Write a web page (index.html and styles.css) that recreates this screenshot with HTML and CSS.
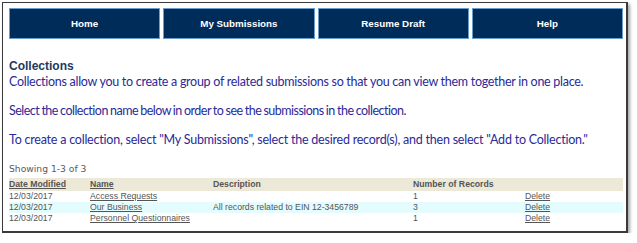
FILE: index.html
```html
<!DOCTYPE html>
<html>
<head>
<meta charset="utf-8">
<link rel="stylesheet" href="styles.css">
</head>
<body>
<div class="frame">
  <nav class="nav">
    <a class="nav-btn">Home</a>
    <a class="nav-btn">My Submissions</a>
    <a class="nav-btn">Resume Draft</a>
    <a class="nav-btn">Help</a>
  </nav>
  <h2 class="title">Collections</h2>
  <p class="intro first">Collections allow you to create a group of related submissions so that you can view them together in one place.</p>
  <p class="intro second">Select the collection name below in order to see the submissions in the collection.</p>
  <p class="intro third">To create a collection, select "My Submissions", select the desired record(s), and then select "Add to Collection."</p>
  <div class="showing">Showing 1-3 of 3</div>
  <table class="grid">
    <colgroup>
      <col class="c-date">
      <col class="c-name">
      <col class="c-desc">
      <col class="c-num">
      <col class="c-del">
    </colgroup>
    <thead>
      <tr>
        <th><a>Date Modified</a></th>
        <th><a>Name</a></th>
        <th>Description</th>
        <th>Number of Records</th>
        <th></th>
      </tr>
    </thead>
    <tbody>
      <tr>
        <td>12/03/2017</td>
        <td><a>Access Requests</a></td>
        <td></td>
        <td>1</td>
        <td><a>Delete</a></td>
      </tr>
      <tr class="alt">
        <td>12/03/2017</td>
        <td><a>Our Business</a></td>
        <td>All records related to EIN 12-3456789</td>
        <td>3</td>
        <td><a>Delete</a></td>
      </tr>
      <tr>
        <td>12/03/2017</td>
        <td><a>Personnel Questionnaires</a></td>
        <td></td>
        <td>1</td>
        <td><a>Delete</a></td>
      </tr>
    </tbody>
  </table>
</div>
</body>
</html>
```
FILE: styles.css
```css
html, body {
  margin: 0;
  padding: 0;
  background: #ffffff;
}
.frame {
  box-sizing: border-box;
  margin: 2px 0 0 2px;
  width: 626px;
  height: 231px;
  border: 1px solid #3a3a3a;
  border-width: 1px 2px 2px 1px;
  box-shadow: 2px 2px 3px rgba(0,0,0,0.35);
  padding: 5px 3px 0 6px;
  font-family: "Liberation Sans", Arial, sans-serif;
}
.nav {
  display: flex;
  gap: 3px;
  width: 614px;
}
.nav-btn {
  flex: 1;
  box-sizing: border-box;
  height: 31px;
  display: flex;
  align-items: center;
  justify-content: center;
  background: #002c5a;
  border: 1px solid #6c9cc8;
  color: #ffffff;
  font-weight: bold;
  font-size: 9.8px;
}
.title {
  margin: 20px 0 0 0;
  font-size: 12px;
  line-height: 14px;
  color: #1d3a62;
  font-weight: bold;
}
.intro {
  margin: 0;
  font-family: Lato, "Open Sans", sans-serif;
  font-size: 12.5px;
  letter-spacing: -0.2px;
  line-height: 16px;
  color: #2a2a98;
  white-space: nowrap;
}
.intro.first {
  margin-top: 1px;
  letter-spacing: -0.28px;
}
.intro.second {
  margin-top: 13px;
  letter-spacing: -0.52px;
  word-spacing: -0.5px;
}
.intro.third {
  margin-top: 13px;
  letter-spacing: -0.22px;
}
.showing {
  margin-top: 15px;
  font-family: "DejaVu Sans", Verdana, sans-serif;
  font-size: 9.2px;
  line-height: 12px;
  color: #5a5a5a;
}
.grid {
  margin-top: 3px;
  width: 614px;
  table-layout: fixed;
  border-collapse: collapse;
  font-size: 8.7px;
  color: #555555;
}
.grid th {
  background: #ece9d9;
  text-align: left;
  font-weight: bold;
  height: 13px;
  padding: 0;
  line-height: 13px;
}
.grid td {
  padding: 0;
  height: 11px;
  line-height: 11px;
  white-space: nowrap;
}
.grid a {
  color: #555555;
  text-decoration: underline;
}
.grid tr.alt td {
  background: #e4fcfd;
}
.c-date { width: 81px; }
.c-name { width: 123px; }
.c-desc { width: 200px; }
.c-num { width: 112px; }
```
